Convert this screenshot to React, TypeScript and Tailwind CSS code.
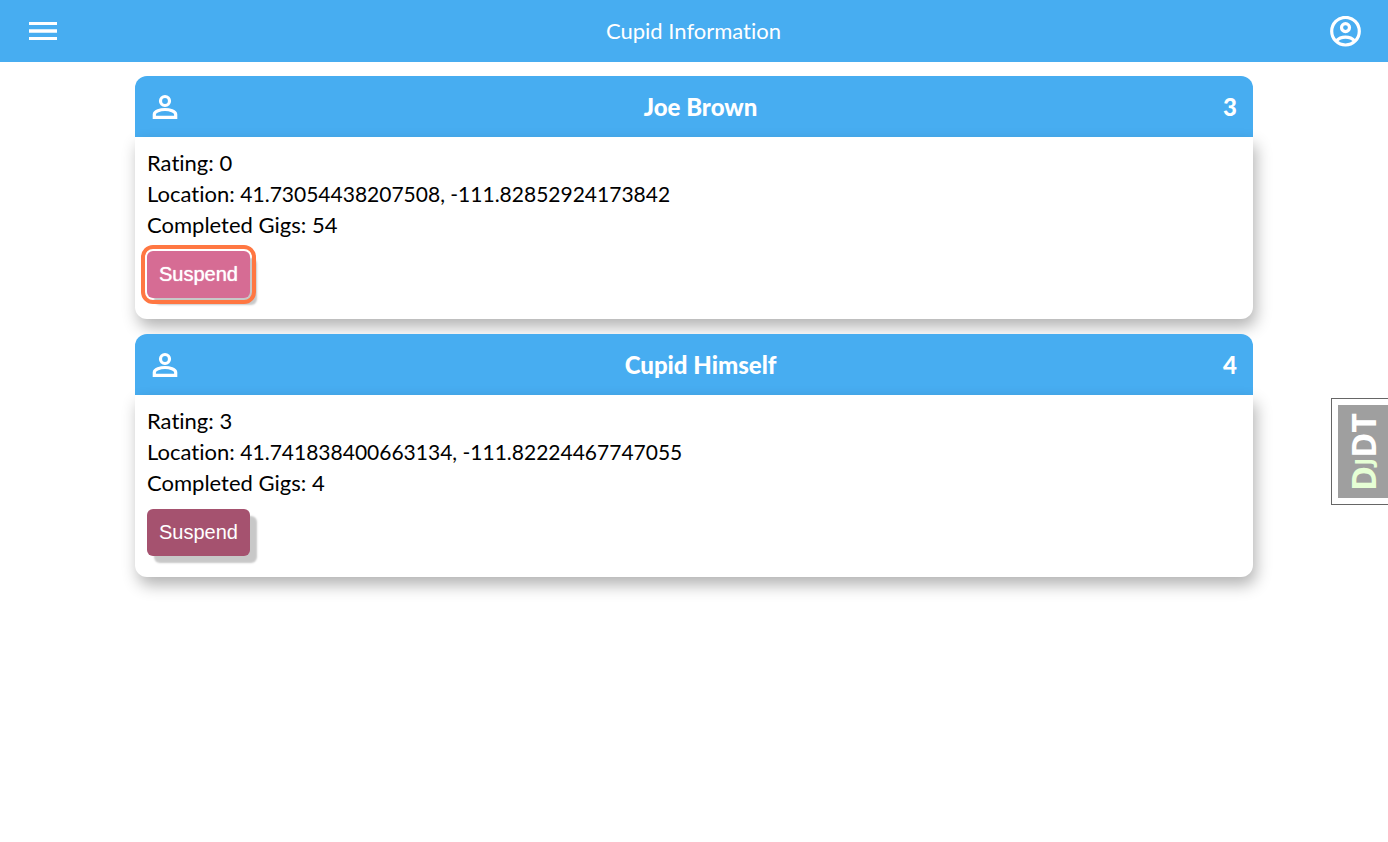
import React from "react";

type Cupid = { id: number; name: string; rating: number; location: string; gigs: number };

const cupids: Cupid[] = [
  { id: 3, name: "Joe Brown", rating: 0, location: "41.73054438207508, -111.82852924173842", gigs: 54 },
  { id: 4, name: "Cupid Himself", rating: 3, location: "41.741838400663134, -111.82224467747055", gigs: 4 },
];

function MenuIcon() {
  return (
    <svg viewBox="0 0 28 20" className="h-5 w-7" fill="currentColor" aria-hidden="true">
      <path d="M0 1h28v3H0zM0 8.2h28v3.6H0zM0 16h28v3H0z" />
    </svg>
  );
}

function AccountIcon() {
  return (
    <svg viewBox="0 0 31 31" className="size-[31px]" fill="none" stroke="currentColor" strokeWidth="3.2" aria-hidden="true">
      <circle cx="15.5" cy="15.2" r="13.800" />
      <circle cx="15.5" cy="11.6" r="4" />
      <path d="M6.4 24.9C8.5 22.500 12 21.100 15.5 21.100s7 1.400 9.100 3.800" />
    </svg>
  );
}

function PersonIcon() {
  return (
    <svg viewBox="0 0 26 26" className="size-[26px]" fill="none" stroke="currentColor" strokeWidth="3.200" aria-hidden="true">
      <circle cx="13" cy="7" r="4.500" />
      <path d="M2.300 23.300v-2.800c0-3.200 6.200-5 10.700-5s10.700 1.800 10.700 5v2.800z" />
    </svg>
  );
}

function CupidCard({ cupid, active }: { cupid: Cupid; active: boolean }) {
  return (
    <article>
      <header className="flex h-[61px] items-center justify-between rounded-t-xl bg-[#47adf1] pr-4 pl-[17px] text-2xl font-black text-white">
        <PersonIcon />
        <h2>{cupid.name}</h2>
        <span>{cupid.id}</span>
      </header>
      <div className="rounded-b-xl bg-white px-3 pt-[10px] pb-[21px] shadow-[3px_8px_16px_rgba(0,0,0,0.3)]">
        <p>Rating: {cupid.rating}</p>
        <p>
          Location: <span className="text-[21px]">{cupid.location}</span>
        </p>
        <p>Completed Gigs: {cupid.gigs}</p>
        <button
          type="button"
          className={
            "mt-[11px] block h-[47px] rounded-[6px] px-3 pb-[2px] font-['Liberation_Sans',Arial,sans-serif] text-xl text-white shadow-[7px_7px_2px_#c8c8c8] " +
            (active ? "bg-[#d66c94] outline-4 outline-offset-2 outline-[#ff7742] [text-shadow:0_0_1px_#fff]" : "bg-[#a5526f]")
          }
        >
          Suspend
        </button>
      </div>
    </article>
  );
}

export default function App() {
  return (
    <div className="min-h-screen bg-white font-[Lato,'Gill_Sans','Gill_Sans_MT',sans-serif] text-[22px] leading-[31px] text-black [font-variant-ligatures:none]">
      <header className="flex h-[62px] items-center justify-between bg-[#47adf1] pr-[27px] pl-[29px] text-white">
        <button type="button" aria-label="Menu">
          <MenuIcon />
        </button>
        <h1 className="pb-[2px]">Cupid Information</h1>
        <button type="button" aria-label="Account">
          <AccountIcon />
        </button>
      </header>
      <main className="mx-[135px] mt-[14px] flex flex-col gap-[15px]">
        {cupids.map((cupid, index) => (
          <CupidCard key={cupid.id} cupid={cupid} active={index === 0} />
        ))}
      </main>
      <a
        href="#djdt"
        aria-label="Show toolbar"
        className="fixed top-[398px] right-0 flex border border-r-0 border-[#666] bg-white py-[6px] pl-[6px]"
      >
        <span className="flex h-[93px] w-[50px] items-center justify-center bg-[#9f9f9f]">
          <span className="rotate-180 font-['Open_Sans',sans-serif] text-[34px] leading-none font-bold text-white [writing-mode:vertical-rl]">
            <span className="text-[#e6ffd5]">
              D<span className="text-[24px]">J</span>
            </span>
            DT
          </span>
        </span>
      </a>
    </div>
  );
}
